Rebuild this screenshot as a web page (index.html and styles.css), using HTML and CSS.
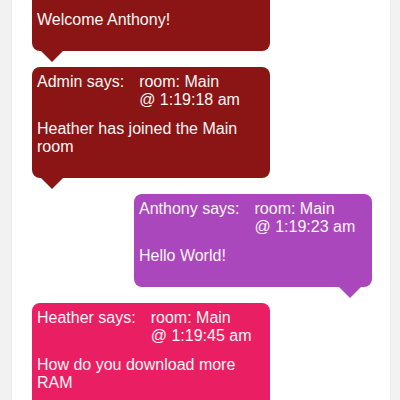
FILE: index.html
```html
<!DOCTYPE html>
<html>
<head>
<meta charset="utf-8">
<link rel="stylesheet" href="styles.css">
</head>
<body>
<div class="panel">
  <div class="chat">
    <div class="msg admin tail-left">
      <div class="head"><span class="who">Admin says:</span><span class="meta"><span>room: Main</span><span>@ 1:19:05 am</span></span></div>
      <p class="text">Welcome Anthony!</p>
    </div>
    <div class="msg admin tail-left">
      <div class="head"><span class="who">Admin says:</span><span class="meta"><span>room: Main</span><span>@ 1:19:18 am</span></span></div>
      <p class="text">Heather has joined the Main room</p>
    </div>
    <div class="msg self tail-right">
      <div class="head"><span class="who">Anthony says:</span><span class="meta"><span>room: Main</span><span>@ 1:19:23 am</span></span></div>
      <p class="text">Hello World!</p>
    </div>
    <div class="msg other tail-left">
      <div class="head"><span class="who">Heather says:</span><span class="meta"><span>room: Main</span><span>@ 1:19:45 am</span></span></div>
      <p class="text">How do you download more RAM</p>
    </div>
  </div>
</div>
</body>
</html>
```
FILE: styles.css
```css
html, body {
  margin: 0;
  padding: 0;
  height: 100%;
  overflow: hidden;
}
body {
  background: #f2f2f2;
  font-family: "Liberation Sans", Arial, sans-serif;
  font-size: 16px;
  line-height: 18px;
}
.panel {
  margin: 0 10px 0 12px;
  background: #fff;
  height: 100%;
  box-shadow: 0 0 2px rgba(0,0,0,0.08);
  padding: 0 18px 0 20px;
  overflow: hidden;
}
.chat {
  display: flex;
  flex-direction: column;
  gap: 16px;
  margin-top: -42px;
}
.msg {
  position: relative;
  width: 238px;
  box-sizing: border-box;
  padding: 6px 5px 22px;
  border-radius: 8px;
  color: #fbf6f6;
}
.admin { background: #8b1515; }
.self { background: #ab47bc; align-self: flex-end; }
.other { background: #e91e63; }
.head {
  display: flex;
  gap: 15px;
}
.meta {
  display: flex;
  flex-direction: column;
}
.text {
  margin: 11px 0 0;
}
.tail-left::after, .tail-right::after {
  content: "";
  position: absolute;
  top: 100%;
  width: 0;
  height: 0;
  border-left: 11px solid transparent;
  border-right: 11px solid transparent;
  border-top: 11px solid;
}
.tail-left::after { left: 9px; }
.tail-right::after { right: 11px; }
.admin::after { border-top-color: #8b1515; }
.self::after { border-top-color: #ab47bc; }
.other::after { border-top-color: #e91e63; }
```
